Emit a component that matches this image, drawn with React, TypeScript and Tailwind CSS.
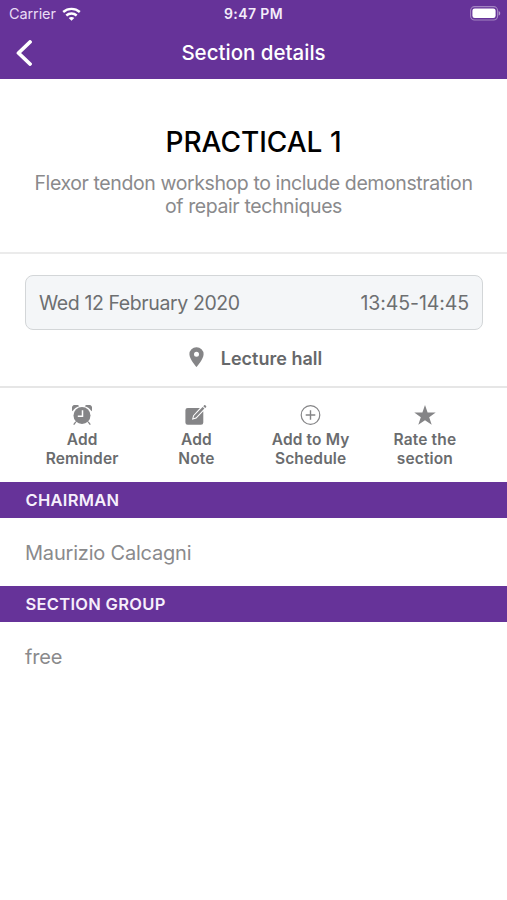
import type { ReactNode } from "react"

function WifiIcon() {
  return (
    <svg width="19" height="14" viewBox="0 0 19 14" fill="none" stroke="currentColor" strokeWidth="2.4">
      <path d="M1.200 5C5.900.8 13.100.8 17.800 5" />
      <path d="M4.300 8.500c3-2.700 7.400-2.700 10.400 0" />
      <path d="M6.700 11 9.500 13.800 12.300 11c-1.600-1.400-4-1.400-5.600 0z" fill="currentColor" stroke="none" />
    </svg>
  )
}

function BatteryIcon() {
  return (
    <svg width="31" height="15" viewBox="0 0 31 15" fill="none">
      <rect x="0.600" y="0.600" width="27" height="13.400" rx="4" stroke="#fff" strokeOpacity="0.400" strokeWidth="1.100" />
      <rect x="2.400" y="2.400" width="23.200" height="9.700" rx="2.300" fill="#fff" />
      <path d="M28.700 5v4.600c1-.4 1.500-1.300 1.500-2.300s-.5-1.900-1.500-2.300z" fill="#fff" fillOpacity="0.500" />
    </svg>
  )
}

function AlarmIcon() {
  return (
    <svg width="20" height="20" viewBox="0 0 20 20" fill="currentColor">
      <circle cx="10" cy="10.600" r="8.500" />
      <path d="M.5 6.200A3.600 3.600 0 0 1 7.200 1.200C4.400 2 2.100 3.700.5 6.200z" />
      <path d="M19.500 6.200a3.600 3.600 0 0 0-6.700-5c2.800.8 5.100 2.500 6.700 5z" />
      <path d="m3.600 17.200-1.500 2M16.400 17.200l1.500 2" stroke="currentColor" strokeWidth="1.300" strokeLinecap="round" />
      <path d="M10.500 5.300v5.900H5.800" stroke="#fff" strokeWidth="1.500" fill="none" />
    </svg>
  )
}

function NoteIcon() {
  return (
    <svg width="22" height="20" viewBox="0 0 22 20" fill="currentColor">
      <path d="M2.700 3h12.200L8.100 10.500 7 14.700l4.400-1.300 6.900-7.200v11.300a2.300 2.300 0 0 1-2.300 2.300H2.700A2.300 2.300 0 0 1 .4 17.500V5.300A2.300 2.300 0 0 1 2.700 3z" />
      <path d="m17.600 1.900 1.800 1.700-8.500 8.800-2.500.8.700-2.500zM18.300 1.200l.9-.9c.4-.3.900-.3 1.300.1l.6.6c.3.400.3.800 0 1.200l-.9.900z" />
    </svg>
  )
}

function PlusCircleIcon() {
  return (
    <svg width="21" height="20" viewBox="0 0 21 20" fill="none" stroke="currentColor">
      <circle cx="10.500" cy="10" r="9.300" strokeWidth="1.200" />
      <path d="M10.500 5.200v9.600M5.700 10h9.600" strokeWidth="1.400" />
    </svg>
  )
}

function StarIcon() {
  return (
    <svg width="22" height="20" viewBox="0 0 22 20" fill="currentColor">
      <path d="m11 0 2.600 7.500h8.100l-6.500 4.700 2.500 7.600L11 15.200l-6.700 4.600 2.500-7.600L.3 7.500h8.100z" />
    </svg>
  )
}

const actions: { icon: ReactNode; lines: [string, string] }[] = [
  { icon: <AlarmIcon />, lines: ["Add", "Reminder"] },
  { icon: <NoteIcon />, lines: ["Add", "Note"] },
  { icon: <PlusCircleIcon />, lines: ["Add to My", "Schedule"] },
  { icon: <StarIcon />, lines: ["Rate the", "section"] },
]

const groups = [
  { title: "CHAIRMAN", value: "Maurizio Calcagni" },
  { title: "SECTION GROUP", value: "free" },
]

export default function App() {
  return (
    <div className="flex min-h-screen w-full flex-col bg-white font-['Inter',sans-serif] text-[#8a8a8c]">
      {/* Status bar + nav */}
      <header className="h-[79px] bg-[#663399] text-white">
        <div className="grid h-[27px] grid-cols-3 items-center pr-[6px] pl-[9px]">
          <div className="flex items-center gap-[6px]">
            <span className="text-[14.500px] tracking-[-0.1px] text-[#e9dcf5]">Carrier</span>
            <WifiIcon />
          </div>
          <span className="-ml-[3px] text-center text-[14px] font-semibold tracking-[0.4px] text-[#f4ecfa]">9:47 PM</span>
          <div className="flex justify-end">
            <BatteryIcon />
          </div>
        </div>
        <div className="grid h-[51px] grid-cols-[1fr_auto_1fr] items-center px-[16px]">
          <button aria-label="Back" className="w-4">
            <svg width="16" height="26" viewBox="0 0 16 26" fill="none" stroke="#fff" strokeWidth="3.800" strokeLinecap="round" strokeLinejoin="round">
              <path d="M14 2 2.500 13 14 24" />
            </svg>
          </button>
          <h1 className="pt-[2px] text-[20.500px] font-medium">Section details</h1>
        </div>
      </header>

      {/* Title */}
      <section className="h-[175px] border-b-2 border-[#ebebeb] pt-[45px] text-center">
        <h2 className="text-[28px] leading-[36px] font-medium text-black">PRACTICAL 1</h2>
        <p className="mt-[12px] text-[19.500px] leading-[23px] tracking-[-0.400px]">
          Flexor tendon workshop to include demonstration
          <br />
          of repair techniques
        </p>
      </section>

      {/* Date and place */}
      <section className="h-[134px] border-b-2 border-[#e6e6e6] pr-[24px] pl-[25px] pt-[21px]">
        <div className="flex h-[55px] items-center justify-between rounded-lg border-[1.500px] border-[#d3d6d8] bg-[#f4f6f8] px-[13px] pt-[2px] text-[19.500px] text-[#6d6f71]">
          <span className="tracking-[-0.400px]">Wed 12 February 2020</span>
          <span className="tracking-[-0.100px]">13:45-14:45</span>
        </div>
        <div className="mt-[14px] flex h-[28px] items-center justify-center gap-[17px] pl-[3px] text-[#66686a]">
          <svg className="-mt-[2px]" width="15" height="21" viewBox="0 0 15 21" fill="#858587">
            <path fillRule="evenodd" d="M7.500.3A7 7 0 0 0 .4 7.300c0 5 7.100 12.800 7.100 12.800s7.100-7.800 7.100-12.800a7 7 0 0 0-7.100-7zm0 4.500a2.500 2.500 0 1 1 0 5 2.500 2.500 0 0 1 0-5z" />
          </svg>
          <span className="text-[18px] font-semibold">Lecture hall</span>
        </div>
      </section>

      {/* Actions */}
      <section className="grid h-[94px] grid-cols-4 px-[25px] pt-[17px]">
        {actions.map((action) => (
          <button key={action.lines.join(" ")} className="flex flex-col items-center gap-[5px]">
            <span className="h-5 text-[#858587]">{action.icon}</span>
            <span className="text-[15.500px] leading-[19px] font-semibold tracking-[0.150px] whitespace-nowrap text-[#6a6c6e]">
              {action.lines[0]}
              <br />
              {action.lines[1]}
            </span>
          </button>
        ))}
      </section>

      {groups.map((group) => (
        <section key={group.title}>
          <h3 className="flex h-[36px] items-center bg-[#663399] px-[25.500px] text-[16.500px] font-semibold tracking-[0.300px] text-[#f6effc]">
            {group.title}
          </h3>
          <p className="flex h-[68px] items-center px-[25px] pt-px text-[20px] tracking-[-0.200px]">{group.value}</p>
        </section>
      ))}
    </div>
  )
}
